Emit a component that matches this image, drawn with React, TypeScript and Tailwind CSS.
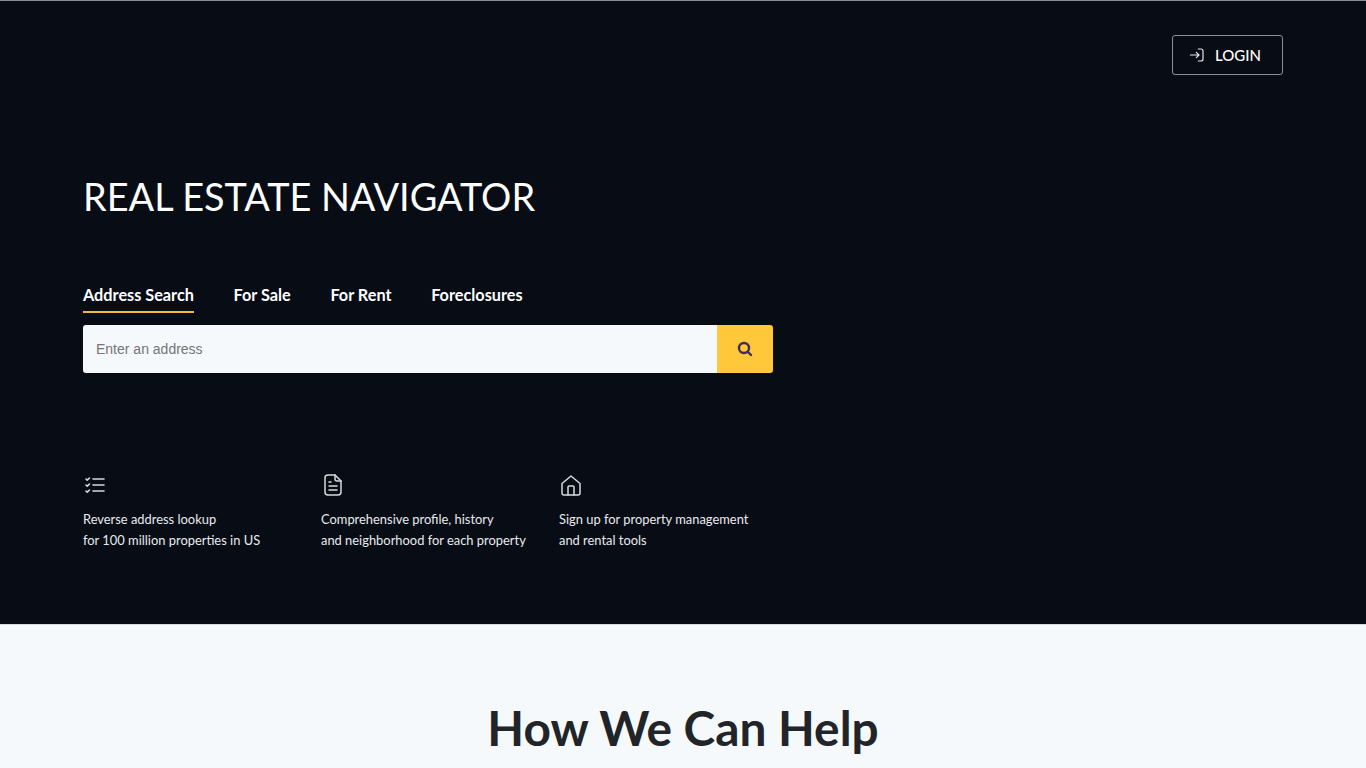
import React from "react";

const features = [
  { icon: "list", lines: ["Reverse address lookup", "for 100 million properties in US"] },
  { icon: "doc", lines: ["Comprehensive profile, history", "and neighborhood for each property"] },
  { icon: "home", lines: ["Sign up for property management", "and rental tools"] },
];

const FeatureIcon = ({ name }: { name: string }) => {
  if (name === "list") {
    return (
      <svg width="24" height="24" viewBox="0 0 24 24" fill="none" stroke="#d8dade" strokeWidth="1.6" strokeLinecap="round" strokeLinejoin="round">
        <path d="M10 6h11M10 12h11M10 18h11M3 6l1.2 1.2L6.5 5M3 12l1.2 1.2L6.5 11M3 18l1.2 1.2L6.5 17" />
      </svg>
    );
  }
  if (name === "doc") {
    return (
      <svg width="24" height="24" viewBox="0 0 24 24" fill="none" stroke="#d8dade" strokeWidth="1.5" strokeLinecap="round" strokeLinejoin="round">
        <path d="M14 2H7a3 3 0 0 0-3 3v14a3 3 0 0 0 3 3h10a3 3 0 0 0 3-3V8z" />
        <path d="M14 2v4a2 2 0 0 0 2 2h4M8 13h8M8 17h8M8 9h2" />
      </svg>
    );
  }
  return (
    <svg width="24" height="24" viewBox="0 0 24 24" fill="none" stroke="#d8dade" strokeWidth="1.5" strokeLinecap="round" strokeLinejoin="round">
      <path d="M3 10.5 12 3l9 7.5V20a2 2 0 0 1-2 2H5a2 2 0 0 1-2-2z" />
      <path d="M9 22v-8a1 1 0 0 1 1-1h4a1 1 0 0 1 1 1v8" />
    </svg>
  );
};

export default function App() {
  return (
    <div className="h-[768px] overflow-hidden bg-[#f6f9fc] font-['Lato',sans-serif]">
      <div className="h-[625px] bg-[#070c15] border-t border-[#8a8f96] border-b-[#d5d8dc] border-b px-[83px]">
        <div className="flex justify-end pt-[34px]">
          <button className="flex h-10 w-[111px] items-center gap-[10px] rounded-[3px] border border-[#8b9097] pl-4 text-[15px] font-medium text-white">
            <svg width="16" height="16" viewBox="0 0 24 24" fill="none" stroke="#e5e7eb" strokeWidth="1.8" strokeLinecap="round" strokeLinejoin="round">
              <path d="M14 3h4a3 3 0 0 1 3 3v12a3 3 0 0 1-3 3h-4M2 12h13M11 8l4 4-4 4" />
            </svg>
            LOGIN
          </button>
        </div>
        <h1 className="mt-[98px] text-[37.85px] leading-[48px] text-white">REAL ESTATE NAVIGATOR</h1>
        <div className="mt-[59px] flex gap-[39.6px] text-[16.25px] font-bold text-white">
          <div className="h-[33px] border-b-2 border-[#f5b93a] leading-[30px]">Address Search</div>
          <div className="leading-[30px]">For Sale</div>
          <div className="leading-[30px]">For Rent</div>
          <div className="leading-[30px]">Foreclosures</div>
        </div>
        <div className="mt-3 flex h-12 w-[690px] overflow-hidden rounded-[3px]">
          <input
            className="flex-1 bg-[#f6f9fc] px-[13px] font-['Liberation_Sans',sans-serif] text-sm text-gray-700 outline-none placeholder:text-[#757575]"
            placeholder="Enter an address"
          />
          <div className="flex w-14 items-center justify-center bg-[#ffc83a]">
            <svg width="16" height="16" viewBox="0 0 16 16" fill="none" stroke="#452c58" strokeWidth="2.4" strokeLinecap="round">
              <circle cx="7" cy="7" r="5" />
              <path d="M11 11l3 3" />
            </svg>
          </div>
        </div>
        <div className="mt-[100px] flex">
          {features.map((f) => (
            <div key={f.icon} className="w-[238px] text-[12.9px] leading-[21px] text-[#e8eaed]">
              <FeatureIcon name={f.icon} />
              <div className="mt-[12px]">
                {f.lines.map((l) => (
                  <div key={l}>{l}</div>
                ))}
              </div>
            </div>
          ))}
        </div>
      </div>
      <h2 className="mt-[73px] text-center text-[47.8px] font-bold leading-[60px] text-[#212529]">How We Can Help</h2>
    </div>
  );
}
